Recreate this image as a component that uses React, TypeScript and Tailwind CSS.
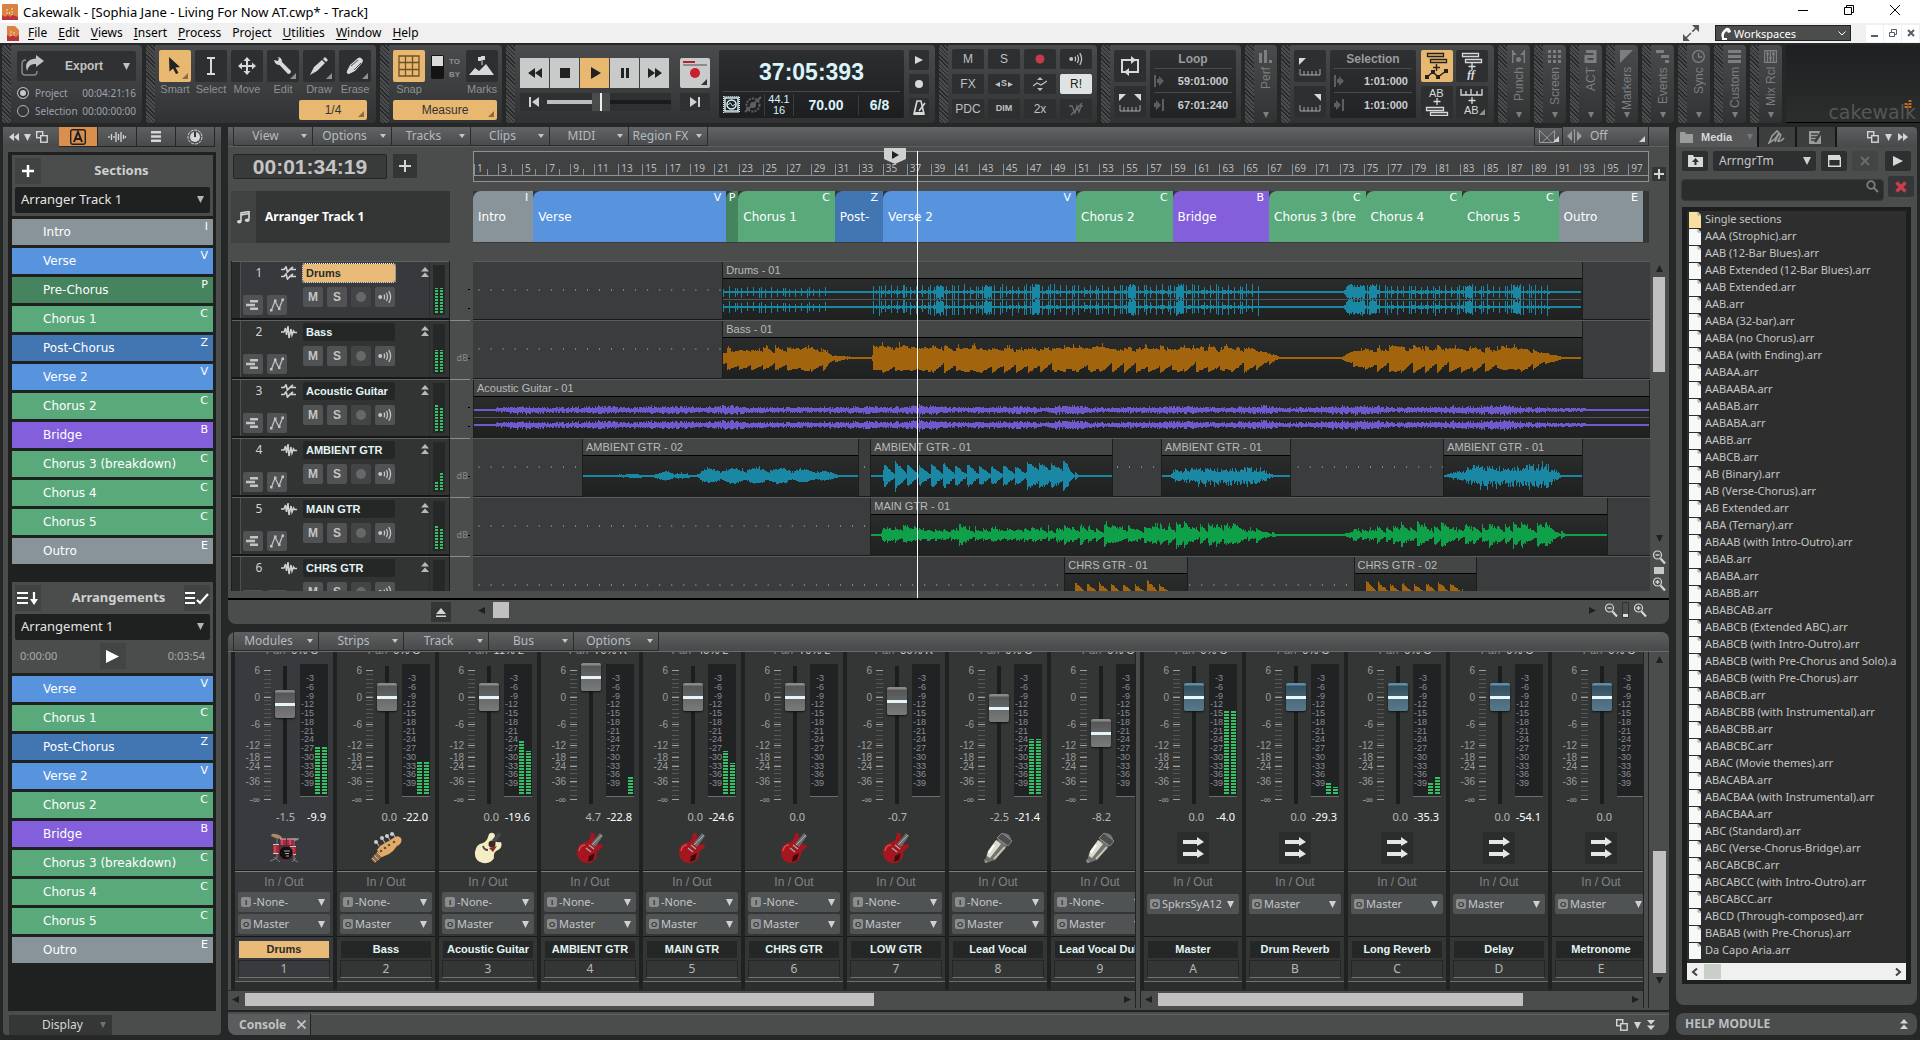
import React from 'react';
import clsx from 'clsx';

const ARIAL = "font-['Liberation_Sans',Arial,sans-serif]";
const VERDANA = "font-['DejaVu_Sans',Verdana,sans-serif]";

interface Section {
  name: string;
  key: string;
  color: string;
  bars: number;
  short?: string;
}

const GRAY = 'bg-[#88939a]';
const BLUE = 'bg-[#5894de]';
const DARK_GREEN = 'bg-[#45845e]';
const GREEN = 'bg-[#5aa97b]';
const DARK_BLUE = 'bg-[#4276b3]';
const PURPLE = 'bg-[#845fdb]';

const sections: Section[] = [
  { name: 'Intro', key: 'I', color: GRAY, bars: 5 },
  { name: 'Verse', key: 'V', color: BLUE, bars: 16 },
  { name: 'Pre-Chorus', key: 'P', color: DARK_GREEN, bars: 1, short: '' },
  { name: 'Chorus 1', key: 'C', color: GREEN, bars: 8 },
  { name: 'Post-Chorus', key: 'Z', color: DARK_BLUE, bars: 4, short: 'Post-' },
  { name: 'Verse 2', key: 'V', color: BLUE, bars: 16 },
  { name: 'Chorus 2', key: 'C', color: GREEN, bars: 8 },
  { name: 'Bridge', key: 'B', color: PURPLE, bars: 8 },
  { name: 'Chorus 3 (breakdown)', key: 'C', color: GREEN, bars: 8, short: 'Chorus 3 (bre' },
  { name: 'Chorus 4', key: 'C', color: GREEN, bars: 8 },
  { name: 'Chorus 5', key: 'C', color: GREEN, bars: 8 },
  { name: 'Outro', key: 'E', color: GRAY, bars: 7 },
];

const arrangement = [1, 3, 4, 5, 6, 7, 8, 9, 10, 11].map((i) => sections[i]);

const mediaFiles = [
  'Single sections',
  'AAA (Strophic).arr',
  'AAB (12-Bar Blues).arr',
  'AAB Extended (12-Bar Blues).arr',
  'AAB Extended.arr',
  'AAB.arr',
  'AABA (32-bar).arr',
  'AABA (no Chorus).arr',
  'AABA (with Ending).arr',
  'AABAA.arr',
  'AABAABA.arr',
  'AABAB.arr',
  'AABABA.arr',
  'AABB.arr',
  'AABCB.arr',
  'AB (Binary).arr',
  'AB (Verse-Chorus).arr',
  'AB Extended.arr',
  'ABA (Ternary).arr',
  'ABAAB (with Intro-Outro).arr',
  'ABAB.arr',
  'ABABA.arr',
  'ABABB.arr',
  'ABABCAB.arr',
  'ABABCB (Extended ABC).arr',
  'ABABCB (with Intro-Outro).arr',
  'ABABCB (with Pre-Chorus and Solo).a',
  'ABABCB (with Pre-Chorus).arr',
  'ABABCB.arr',
  'ABABCBB (with Instrumental).arr',
  'ABABCBB.arr',
  'ABABCBC.arr',
  'ABAC (Movie themes).arr',
  'ABACABA.arr',
  'ABACBAA (with Instrumental).arr',
  'ABACBAA.arr',
  'ABC (Standard).arr',
  'ABC (Verse-Chorus-Bridge).arr',
  'ABCABCBC.arr',
  'ABCABCC (with Intro-Outro).arr',
  'ABCABCC.arr',
  'ABCD (Through-composed).arr',
  'BABAB (with Pre-Chorus).arr',
  'Da Capo Aria.arr',
];

/* ---------- small drawings ---------- */

interface SvgProps {
  w: number;
  h: number;
  className?: string;
  children: React.ReactNode;
}

function Svg({ w, h, className, children }: SvgProps) {
  return (
    <svg width={w} height={h} viewBox={`0 0 ${w} ${h}`} className={clsx('shrink-0', className)} fill="currentColor" aria-hidden="true">
      {children}
    </svg>
  );
}

const line = { fill: 'none', stroke: 'currentColor' };

function Tri({ dir, size = 8, className }: { dir: 'up' | 'down' | 'left' | 'right'; size?: number; className?: string }) {
  const d = {
    up: 'M0 8L4 0L8 8Z',
    down: 'M0 0H8L4 8Z',
    left: 'M8 0V8L0 4Z',
    right: 'M0 0V8L8 4Z',
  }[dir];
  return (
    <svg width={size} height={size} viewBox="0 0 8 8" className={clsx('shrink-0', className)} fill="currentColor" aria-hidden="true">
      <path d={d} />
    </svg>
  );
}

const FlatCaret = () => (
  <Svg w={6} h={4} className="text-[#c5c6c6]">
    <path d="M0 0H6L3 4Z" />
  </Svg>
);

const Corner = ({ className }: { className?: string }) => (
  <Svg w={6} h={6} className={clsx('absolute right-[3px] bottom-[3px]', className ?? 'text-[#8f9090]')}>
    <path d="M6 0V6H0Z" />
  </Svg>
);

const Echo = () => (
  <Svg w={14} h={14}>
    <circle cx="2.2" cy="7" r="2" />
    <path d="M6 4.6Q7.2 7 6 9.4M8.4 3Q10.6 7 8.4 11M10.8 1.2Q14.4 7 10.8 12.8" {...line} strokeWidth="1.3" />
  </Svg>
);

const Windows = () => (
  <Svg w={12} h={12}>
    <rect x="0.7" y="0.7" width="6" height="6" {...line} strokeWidth="1.4" />
    <rect x="4.7" y="4.7" width="6.5" height="6.5" fill="#4a4c4c" stroke="currentColor" strokeWidth="1.4" />
  </Svg>
);

const Logo = () => (
  <Svg w={16} h={16}>
    <rect width="16" height="16" rx="1" fill="#d98244" />
    <path d="M0 11L3 13L6 11L8 13L11 11L16 13V16H0Z" fill="#b8333b" />
    <path d="M5 5V11M7.5 8V11M10 4V11" stroke="#f6dfa8" strokeDasharray="2 1" />
  </Svg>
);

const DocLogo = () => (
  <Svg w={12} h={15}>
    <path d="M0 0H8L12 4V15H0Z" fill="#d98244" />
    <path d="M0 9L3 11L6 9L9 11L12 9V15H0Z" fill="#b8333b" />
    <path d="M4 5V10M7 6V10" stroke="#f6dfa8" strokeDasharray="2 1" />
  </Svg>
);

const DoubleUp = ({ down = false }: { down?: boolean }) => (
  <Svg w={8} h={10} className={down ? 'rotate-180' : ''}>
    <path d="M0 4.5L4 0L8 4.5ZM0 10L4 5.5L8 10Z" />
  </Svg>
);

const StereoIcon = () => (
  <Svg w={16} h={14}>
    <path d="M0 3.5H3L5 1L6.5 6L9 3.5L12 1M9 3.5H15M0 10.5H3L5 8L6.5 13L9 10.5L12 8M9 10.5H15" {...line} strokeWidth="1.7" />
  </Svg>
);

const MonoIcon = () => (
  <Svg w={16} h={14}>
    <path d="M0 7H3L4.5 3L5.5 10L7 1L8 13L10 4L11 10L12.5 6L13.5 7.5H16" {...line} strokeWidth="1.5" />
  </Svg>
);

const Zoomer = ({ plus = false }: { plus?: boolean }) => (
  <Svg w={14} h={14}>
    <circle cx="5.5" cy="5" r="4" {...line} strokeWidth="1.2" />
    <path d="M8.5 8.5L13 13.5" {...line} strokeWidth="2.2" />
    <path d={plus ? 'M3.5 5H7.5M5.5 3V7' : 'M3.5 5H7.5'} {...line} strokeWidth="1.4" />
  </Svg>
);

const RulerGlyph = ({ left, right }: { left?: boolean; right?: boolean }) => (
  <Svg w={24} h={22}>
    <path d="M2 14V20H22V14M6 16V20M10 16V20M14 16V20M18 16V20" {...line} strokeWidth="1" opacity="0.7" />
    {left && <path d="M1 3H8L1 10Z" />}
    {right && <path d="M23 3H16L23 10Z" />}
  </Svg>
);

/* ---------- title and menu ---------- */

const menus = ['File', 'Edit', 'Views', 'Insert', 'Process', 'Project', 'Utilities', 'Window', 'Help'];

function TitleBar() {
  return (
    <header>
      <div className="flex h-[23px] items-center bg-white pl-[2px] text-black">
        <Logo />
        <h1 className="ml-[5px] flex-1 text-[13px] leading-5">Cakewalk - [Sophia Jane - Living For Now AT.cwp* - Track]</h1>
        <div className="mb-1 flex items-center gap-9 pr-[20px]">
          <button type="button" aria-label="Minimize">
            <Svg w={10} h={10}><path d="M0 5.5H10" {...line} /></Svg>
          </button>
          <button type="button" aria-label="Restore">
            <Svg w={10} h={10}><path d="M0.5 2.5H7.5V9.5H0.5ZM2.5 2.5V0.5H9.5V7.5H7.5" {...line} /></Svg>
          </button>
          <button type="button" aria-label="Close">
            <Svg w={10} h={10}><path d="M0 0L10 10M10 0L0 10" {...line} /></Svg>
          </button>
        </div>
      </div>
      <div className="flex h-5 items-center bg-[#f0f0f0] pl-[7px] text-black">
        <DocLogo />
        <nav className="ml-[9px] flex flex-1">
          {menus.map((m) => (
            <button key={m} type="button" className="mr-[11px] pb-px text-[12px] leading-4">
              {m === 'Project' ? m : <><span className="underline underline-offset-2">{m[0]}</span>{m.slice(1)}</>}
            </button>
          ))}
        </nav>
        <Svg w={16} h={16} className="mr-4 text-[#555]">
          <path d="M9 0H16V7ZM0 9V16H7Z" />
          <path d="M3 13L13 3" {...line} strokeWidth="1.5" strokeDasharray="7 2" />
        </Svg>
        <div className="relative flex h-4 w-[136px] items-center border border-[#222] bg-[#4b4c4c] text-white">
          <Svg w={12} h={13} className="ml-1">
            <path d="M2 13V11Q0 6 4 3L6 1Q10 0 11 5L8 6L7 4Q3 6 4 11H7V13Z" />
          </Svg>
          <select aria-label="Workspaces" className="absolute inset-0 w-full appearance-none bg-transparent pl-[18px] text-[11px] leading-[13px]">
            <option>Workspaces</option>
          </select>
          <Svg w={8} h={5} className="absolute right-[4px]"><path d="M0.5 0.5L4 4L7.5 0.5" {...line} /></Svg>
        </div>
        <div className="ml-[15px] flex h-[17px] gap-[1px] pr-px text-[#4f5f6f]">
          <button type="button" aria-label="Minimize document" className="grid w-[17px] place-items-center bg-white">
            <Svg w={7} h={8}><path d="M0 7H7" {...line} strokeWidth="2" /></Svg>
          </button>
          <button type="button" aria-label="Restore document" className="grid w-[17px] place-items-center bg-white">
            <Svg w={8} h={8}><path d="M0.5 3.5H5.5V7.5H0.5ZM2.5 3V0.5H7.5V5.5H6" {...line} /></Svg>
          </button>
          <button type="button" aria-label="Close document" className="grid w-[17px] place-items-center bg-white">
            <Svg w={8} h={8}><path d="M1 1L7 7M7 1L1 7" {...line} strokeWidth="2" /></Svg>
          </button>
        </div>
      </div>
    </header>
  );
}

/* ---------- control bar ---------- */

function Module({ className, children }: { className?: string; children: React.ReactNode }) {
  return (
    <div className="flex h-[78px] shrink-0 overflow-hidden rounded-sm bg-gradient-to-b from-[#4a4b4c] via-[#3d3f41] to-[#303233]">
      <div className="w-[9px] bg-[repeating-linear-gradient(45deg,#27282a_0_1px,#4a4b4d_1px_3px)]" />
      <div className={className}>{children}</div>
    </div>
  );
}

interface PadProps {
  label: string;
  className?: string;
  active?: boolean;
  children: React.ReactNode;
}

function Pad({ label, className = 'size-8', active, children }: PadProps) {
  return (
    <button
      type="button"
      aria-label={label}
      className={clsx(
        'relative grid shrink-0 place-items-center rounded-xs',
        active ? 'bg-[#e8b871] text-[#222]' : 'bg-[#2e2f30] text-[#d8dad9]',
        className,
      )}
    >
      {children}
    </button>
  );
}

function Tool({ label, active, corner, children }: { label: string; active?: boolean; corner?: boolean; children: React.ReactNode }) {
  return (
    <div className="flex w-8 flex-col items-center">
      <Pad label={label} active={active}>
        {children}
        {corner && <Corner className={active ? 'text-[#8c6c3c]' : undefined} />}
      </Pad>
      <span className="text-[11px] leading-[15px] text-[#8f9192]">{label}</span>
    </div>
  );
}

function ExportModule() {
  return (
    <Module className="flex w-[131px] flex-col px-[6px] pt-[6px]">
      <button type="button" className="mb-[3px] flex h-[30px] items-center rounded-xs bg-[#303132] pl-1 text-[12px] font-bold text-[#c2c4c4]">
        <Svg w={24} h={22}>
          <path d="M5 5Q1 5 1 9V17Q1 20 4 20H13Q16 20 16 16" {...line} strokeWidth="1.5" opacity="0.6" />
          <path d="M15 0L23 6L15 12V9Q8 8 6 16Q2 5 15 3.5Z" />
        </Svg>
        <span className="flex-1">Export</span>
        <Tri dir="down" size={7} className="mr-[6px]" />
      </button>
      {[
        ['Project', '00:04:21:16'],
        ['Selection', '00:00:00:00'],
      ].map(([name, time], i) => (
        <label key={name} className="flex h-[18px] items-center font-['Noto_Sans',sans-serif] text-[10px] text-[#9ba3ae]">
          <input
            type="radio"
            name="export-range"
            defaultChecked={i === 0}
            className="size-3 appearance-none rounded-full border border-[#b5b5b5] checked:bg-[#c8c8c8] checked:shadow-[inset_0_0_0_2px_#303132]"
          />
          <span className="flex-1 pl-[6px]">{name}</span>
          <span>{time}</span>
        </label>
      ))}
    </Module>
  );
}

function ToolsModule() {
  return (
    <Module className="w-[221px] px-1 pt-[5px]">
      <div className="flex gap-1">
        <Tool label="Smart" active corner>
          <Svg w={14} h={18}><path d="M1 0L12 10L7.5 10.5L10.5 16L8 17L5 11.5L1.5 14.5Z" /></Svg>
        </Tool>
        <Tool label="Select">
          <Svg w={10} h={18}><path d="M1 1H9M1 17H9M5 1V17" {...line} strokeWidth="2" /></Svg>
        </Tool>
        <Tool label="Move">
          <Svg w={18} h={18}>
            <path d="M9 2V16M2 9H16" {...line} strokeWidth="2" />
            <path d="M9 0L12.5 4H5.5ZM9 18L12.5 14H5.5ZM0 9L4 5.5V12.5ZM18 9L14 5.5V12.5Z" />
          </Svg>
        </Tool>
        <Tool label="Edit" corner>
          <Svg w={18} h={18}>
            <path d="M0 3L4 4L5 1L3 0Q8 0 8 5L17 14Q17 17 14 17L5.5 8Q1 8 0 3Z" />
          </Svg>
        </Tool>
        <Tool label="Draw" corner>
          <Svg w={18} h={18}>
            <path d="M15 0L18 3L16 5L13 2ZM12 3L15 6L7 14L0 18L4 10Z" />
          </Svg>
        </Tool>
        <Tool label="Erase" corner>
          <Svg w={18} h={18}>
            <path d="M12 1Q14 0 15 1L17 3Q17 4 16 6L9 14L3 17Q0 17 1 14L4 8Z" />
            <path d="M5 9L12 3M8 13L15 6" stroke="#555" fill="none" />
          </Svg>
        </Tool>
      </div>
      <button type="button" className="relative mt-px ml-[140px] h-5 w-[68px] rounded-xs bg-[#e8b871] text-[12px] leading-5 text-[#333]">
        1/4
        <Corner className="text-[#8c6c3c]" />
      </button>
    </Module>
  );
}

function SnapModule() {
  return (
    <Module className="w-[113px] px-1 pt-[5px]">
      <div className="flex justify-between">
        <Tool label="Snap" active>
          <Svg w={22} h={22}><path d="M1 1H21V21H1ZM7.5 1V21M14.5 1V21M1 7.5H21M1 14.5H21" {...line} stroke="#6d5226" strokeWidth="1.3" /></Svg>
        </Tool>
        <div className="mt-[5px] flex gap-[5px]">
          <button type="button" aria-label="Snap to or by" className="flex h-6 w-[13px] items-start rounded-xs bg-[#141414] p-px">
            <span className="h-[10px] flex-1 bg-[#dadada]" />
          </button>
          <div className="text-[8px] leading-[13px] font-bold text-[#8f9192]">
            <div>TO</div>
            <div>BY</div>
          </div>
        </div>
        <Tool label="Marks">
          <Svg w={26} h={20}>
            <path d="M0 19L6 12L10 15L17 8L25 19Z" />
            <path d="M13 2V9" {...line} strokeWidth="1" />
            <path d="M9 1H12V5H9ZM12 0H16V4H12Z" />
          </Svg>
        </Tool>
      </div>
      <button type="button" className="relative mt-px h-5 w-[104px] rounded-xs bg-[#e8b871] text-[12px] leading-5 text-[#333]">
        Measure
        <Corner className="text-[#8c6c3c]" />
      </button>
    </Module>
  );
}

const transport: [string, string][] = [
  ['Rewind', 'M8 2V12L1 7ZM15 2V12L8 7Z'],
  ['Stop', 'M3 2H13V12H3Z'],
  ['Play', 'M4 1L14 7L4 13Z'],
  ['Pause', 'M4 2H7V12H4ZM9 2H12V12H9Z'],
  ['Fast forward', 'M1 2V12L8 7ZM8 2V12L15 7Z'],
];

function TransportModule() {
  return (
    <Module className="flex w-[420px] gap-[5px] pt-[5px] pl-[5px]">
      <div className="mr-[4px] flex w-[190px] flex-col pt-2">
        <div className="flex justify-between">
          <div className="flex gap-px">
            {transport.map(([name, d]) => (
              <button
                key={name}
                type="button"
                aria-label={name}
                className={clsx('grid h-[30px] w-[29px] place-items-center', name === 'Play' ? 'bg-[#e8b871]' : 'bg-[#c9cbca]')}
              >
                <Svg w={16} h={14} className="text-[#222]"><path d={d} /></Svg>
              </button>
            ))}
          </div>
          <button type="button" aria-label="Record" className="relative grid h-[30px] w-[30px] place-items-center rounded-xs bg-[#c9cbca]">
            <Svg w={30} h={30}>
              <path d="M3 3H15V5H3Z" fill="#b5222e" />
              <path d="M3 6H27V8H3Z" fill="#8c8c8c" />
              <circle cx="15" cy="15" r="5" fill="#c8202f" />
            </Svg>
            <Corner className="text-[#333]" />
          </button>
        </div>
        <div className="mt-[5px] flex h-[18px] items-center justify-between">
          <div className="flex h-full items-center bg-[#2f3031] text-[#d0d0d0]">
            <button type="button" aria-label="Go to start" className="grid w-[27px] place-items-center">
              <Svg w={10} h={10}><path d="M0 0H2V10H0ZM10 0V10L3 5Z" /></Svg>
            </button>
            <input
              type="range"
              aria-label="Song position"
              defaultValue={42}
              className="h-[4px] w-[124px] appearance-none bg-gradient-to-r from-[#bdbdbd] from-42% to-[#1b1b1c] to-42% [&::-webkit-slider-thumb]:h-[18px] [&::-webkit-slider-thumb]:w-[18px] [&::-webkit-slider-thumb]:appearance-none [&::-webkit-slider-thumb]:bg-[linear-gradient(to_right,#4a4c4c_0_8px,#eee_8px_10px,#4a4c4c_10px)]"
            />
          </div>
          <button type="button" aria-label="Go to end" className="grid h-full w-[30px] place-items-center bg-[#2f3031] text-[#d0d0d0]">
            <Svg w={10} h={10}><path d="M8 0H10V10H8ZM0 0V10L7 5Z" /></Svg>
          </button>
        </div>
      </div>
      <div className="flex h-[68px] w-[185px] flex-col rounded-xs bg-gradient-to-b from-[#2d2e2f] to-[#1d1e1f] px-1 text-[#d9f4fb]">
        <div className="flex h-[42px] items-center justify-center border-b border-[#484848] pt-1 text-[23px] font-bold">37:05:393</div>
        <div className="flex h-[25px] items-center">
          <Svg w={17} h={17} className="text-[#d9f4fb]">
            <rect x="2" y="2" width="13" height="13" {...line} strokeWidth="1.4" />
            <rect x="0.7" y="0.7" width="15.6" height="15.6" {...line} strokeWidth="1.4" strokeDasharray="1 1" />
            <circle cx="8.5" cy="8.5" r="4.5" {...line} strokeWidth="1.5" />
            <path d="M5.5 9Q7 5 8.5 8.5T11.5 8" {...line} />
          </Svg>
          <Svg w={18} h={17} className="ml-1 text-[#5d6061]">
            <circle cx="9" cy="9" r="6.5" {...line} strokeWidth="2" strokeDasharray="2 1.2" />
            <circle cx="9" cy="9" r="3" />
            <path d="M1 16L17 1" {...line} strokeWidth="2" />
          </Svg>
          <div className="ml-[2px] w-[30px] border-x border-[#3c3c3c] text-center text-[11px] leading-[11px]">
            44.1<br />16
          </div>
          <div className="h-5 flex-1 text-center text-[14px] leading-5 font-bold">70.00</div>
          <div className="h-5 w-[42px] border-l border-[#3c3c3c] text-center text-[14px] leading-5 font-bold">6/8</div>
        </div>
      </div>
      <div className="flex h-[68px] flex-col justify-between">
        <Pad label="Play options" className="size-5"><Tri dir="right" /></Pad>
        <Pad label="Record options" className="size-5"><Svg w={8} h={8}><circle cx="4" cy="4" r="4" /></Svg></Pad>
        <Pad label="Metronome" className="size-5">
          <Svg w={14} h={16}><path d="M5 1H9L12 14H2ZM7 11L13 3" {...line} strokeWidth="1.6" /><path d="M2 12H12V15H2Z" /></Svg>
        </Pad>
      </div>
    </Module>
  );
}

function MixModule() {
  const cells: [string, React.ReactNode][] = [
    ['Mute', 'M'],
    ['Solo', 'S'],
    ['Arm', <Svg w={10} h={10} className="text-[#c33c4c]"><circle cx="5" cy="5" r="4.5" /></Svg>],
    ['Input echo', <Echo />],
    ['Bypass effects', 'FX'],
    ['Exclusive solo', <span className="flex items-center gap-px text-[9px] font-bold"><Tri dir="left" size={5} />S<Tri dir="right" size={5} /></span>],
    ['Automation', <Svg w={14} h={14}><path d="M7 0L10 3H4ZM7 14L10 11H4Z" /><path d="M0 9L4 6L8 8L14 4" {...line} strokeWidth="1.2" /></Svg>],
    ['Read automation', 'R!'],
    ['Delay compensation', 'PDC'],
    ['Dim', <span className="text-[9px] font-bold">DIM</span>],
    ['Oversampling', '2x'],
    ['Bypass wave', <Svg w={14} h={14} className="text-[#6a6c6d]"><path d="M0 4L3 4L6 11L8 4L10 10L12 4H14M2 13L13 1" {...line} strokeWidth="1.3" /></Svg>],
  ];
  return (
    <Module className="w-[149px] pt-1 pl-1">
      <div className="grid w-[140px] grid-cols-4 gap-x-1 gap-y-[5px]">
        {cells.map(([name, body]) => (
          <button
            key={name}
            type="button"
            aria-label={name}
            className={clsx(
              'grid h-5 place-items-center rounded-xs text-[12px]',
              name === 'Read automation' ? 'bg-[#dfe3e3] text-[#222]' : 'bg-[#2e2f30] text-[#bfc1c1]',
            )}
          >
            {body}
          </button>
        ))}
      </div>
    </Module>
  );
}

function RangeLcd({ title, from, to }: { title: string; from: string; to: string }) {
  return (
    <div className="flex h-[68px] w-[86px] flex-col rounded-xs bg-gradient-to-b from-[#2f3031] to-[#222324] px-1 text-[12px] leading-4 font-bold">
      <div className="flex h-[19px] items-center justify-center border-b border-[#484a4b] text-[#9a9c9d]">{title}</div>
      <div className="flex h-6 items-center justify-between border-b border-[#484a4b] pr-1 text-[11px] text-[#c9cdd2]">
        <Svg w={10} h={12} className="text-[#5c5e5f]"><path d="M0 0H2V12H0ZM3 4H5V1L10 6L5 11V8H3Z" /></Svg>
        {from}
      </div>
      <div className="flex h-6 items-center justify-between pr-1 text-[11px] text-[#c9cdd2]">
        <Svg w={10} h={12} className="text-[#5c5e5f]"><path d="M8 0H10V12H8ZM0 4H2V1L7 6L2 11V8H0Z" /></Svg>
        {to}
      </div>
    </div>
  );
}

function LoopModule() {
  return (
    <Module className="flex w-[131px] gap-1 pt-[5px] pl-1">
      <div className="flex h-[68px] flex-col justify-between">
        <Pad label="Loop on/off">
          <Svg w={20} h={20}>
            <path d="M5 16H2V4H12M15 4H18V16H8" {...line} strokeWidth="2" />
            <path d="M11 0L16 4L11 8ZM9 12L4 16L9 20Z" />
          </Svg>
        </Pad>
        <Pad label="Loop to selection"><RulerGlyph left right /></Pad>
      </div>
      <RangeLcd title="Loop" from="59:01:000" to="67:01:240" />
    </Module>
  );
}

function SelectionModule() {
  return (
    <Module className="flex w-[204px] gap-1 pt-[5px] pl-1">
      <div className="flex h-[68px] flex-col justify-between">
        <Pad label="Selection start"><RulerGlyph left /></Pad>
        <Pad label="Selection end"><RulerGlyph right /></Pad>
      </div>
      <RangeLcd title="Selection" from="1:01:000" to="1:01:000" />
      <div className="grid h-[68px] grid-cols-2 content-between gap-x-[3px] pl-px">
        <Pad label="Select track envelopes" active>
          <Svg w={24} h={28}>
            <path d="M2.5 1.5H18.5V4.5H2.5ZM5.5 7.5H21.5V10.5H5.5Z" {...line} strokeWidth="1.3" />
            <path d="M11.5 12V19M8 15.5H15M2 25L8 20L13 25L21 19" {...line} strokeWidth="1.4" />
            <path d="M0 23H4V27H0ZM6 18H10V22H6ZM11 23H15V27H11ZM19 17H23V21H19Z" />
          </Svg>
        </Pad>
        <Pad label="Select articulations">
          <Svg w={24} h={28}>
            <path d="M2.5 1.5H18.5V4.5H2.5ZM5.5 7.5H21.5V10.5H5.5Z" {...line} strokeWidth="1.3" />
            <path d="M12 11V18M8.5 14.5H15.5" {...line} strokeWidth="1.4" />
            <text x="7" y="27" fontSize="12" fontWeight="bold" fontStyle="italic" fontFamily="Liberation Serif">ff</text>
          </Svg>
        </Pad>
        <Pad label="Select sections">
          <Svg w={24} h={28}>
            <text x="4" y="9" fontSize="11" fontFamily="Liberation Sans">AB</text>
            <path d="M12 10V17M8.5 13.5H15.5M1.5 19.5H18.5V22.5H1.5ZM5.5 24.5H22.5V27.5H5.5Z" {...line} strokeWidth="1.3" />
          </Svg>
        </Pad>
        <Pad label="Select time ruler">
          <Svg w={24} h={28}>
            <path d="M1 1V7H22V1M6 3V7M11 1V7M17 3V7M12 9V16M8.5 12.5H15.5" {...line} strokeWidth="1.3" />
            <text x="4" y="26" fontSize="11" fontFamily="Liberation Sans">AB</text>
          </Svg>
          <Corner />
        </Pad>
      </div>
    </Module>
  );
}

const collapsed: [string, React.ReactNode][] = [
  ['Punch', <><path d="M0.7 0V13M12.3 0V13" {...line} strokeWidth="1.4" /><path d="M0 0L5 5H0ZM13 0L8 5H13Z" /><circle cx="6.5" cy="9.5" r="2.5" /></>],
  ['Screen', <path d="M0 0H3V3H0ZM5 0H8V3H5ZM10 0H13V3H10ZM0 5H3V8H0ZM5 5H8V8H5ZM10 5H13V8H10ZM0 10H3V13H0ZM5 10H8V13H5ZM10 10H13V13H10Z" />],
  ['ACT', <path d="M2 1.5H11V11.5H2V6.5H11" {...line} strokeWidth="3" />],
  ['Markers', <path d="M0 0H13L0 13Z" />],
  ['Events', <path d="M0 0H8V3H0ZM5 5H13V8H5ZM9 10H13V13H9Z" />],
  ['Sync', <path d="M6.5 0.7A5.8 5.8 0 1 1 6.49 0.7ZM6.5 3V7H10" {...line} strokeWidth="1.3" />],
  ['Custom', <path d="M0 0H13V3H0ZM0 5H13V8H0ZM0 10H13V13H0Z" />],
  ['Mix Rcl', <path d="M0.5 0.5H12.5V12.5H0.5ZM3.5 1V12M6.5 1V12M9.5 1V12M2 4H5M5 8H8M8 4H11" {...line} strokeWidth="1.4" />],
];

function CollapsedModule({ name, icon }: { name: string; icon: React.ReactNode }) {
  return (
    <Module className="w-[23px] pt-[5px] text-[#7c7e7f]">
      <button type="button" className="flex h-[68px] w-full flex-col items-center">
        <Svg w={13} h={13}>{icon}</Svg>
        <span className="mt-[4px] flex-1 rotate-180 text-right text-[12px] leading-4 whitespace-nowrap [writing-mode:vertical-rl]">{name}</span>
        <Tri dir="down" size={6} />
      </button>
    </Module>
  );
}

function ControlBar() {
  return (
    <div className={clsx('flex gap-1 pt-[2px] pl-[2px]', ARIAL)}>
      <ExportModule />
      <ToolsModule />
      <SnapModule />
      <TransportModule />
      <MixModule />
      <LoopModule />
      <CollapsedModule name="Perf" icon={<path d="M0 3H3V13H0ZM5 0H8V13H5ZM10 10H13V13H10Z" />} />
      <SelectionModule />
      {collapsed.map(([name, icon]) => (
        <CollapsedModule key={name} name={name} icon={icon} />
      ))}
      <div className="flex h-[78px] min-w-0 flex-1 items-end justify-end overflow-hidden border-b border-black bg-gradient-to-b from-[#1f2021] to-[#2c2d2d] pr-1">
        <div className="relative font-['DejaVu_Sans',sans-serif] text-[19px] leading-5 text-[#565656]">
          cakewalk
          <Svg w={9} h={8} className="absolute -top-[2px] right-[3px] text-[#c76a1e]">
            <path d="M2 8V3M6 8V0" {...line} strokeWidth="3" strokeDasharray="2 1" />
          </Svg>
        </div>
      </div>
    </div>
  );
}

/* ---------- inspector on the left ---------- */

function SectionRow({ section }: { section: Section }) {
  return (
    <li>
      <button type="button" className={clsx('relative flex h-[26px] w-full items-center pl-[31px] text-[12px] text-white', VERDANA, section.color)}>
        {section.name}
        <span className="absolute top-px right-[5px] text-[11px] leading-[13px]">{section.key}</span>
      </button>
    </li>
  );
}

function DarkSelect({ value }: { value: string }) {
  return (
    <div className="relative mx-[3px] h-[26px] rounded-xs bg-[#1f2020]">
      <select aria-label={value} className="block h-full w-full appearance-none pl-[6px] text-[13px] text-[#e4e4e4]">
        <option>{value}</option>
      </select>
      <Tri dir="down" size={7} className="absolute top-[9px] right-[6px] text-[#b5b5b5]" />
    </div>
  );
}

function Inspector() {
  return (
    <aside className="flex w-[218px] shrink-0 flex-col rounded-sm bg-[#4b4d4d]">
      <div className="flex h-5 items-center bg-gradient-to-b from-[#5d5f60] to-[#47494a] text-[#d5d7d7]">
        <div className="flex w-14 items-center gap-[5px] pl-[6px]">
          <Svg w={10} h={8}><path d="M5 0V8L0 4ZM10 0V8L5 4Z" /></Svg>
          <Tri dir="down" size={7} />
          <Windows />
        </div>
        {['Arranger', 'Clip', 'Track', 'ProChannel'].map((t, i) => (
          <button
            key={t}
            type="button"
            aria-label={t}
            className={clsx('grid h-5 w-[39px] place-items-center border-r border-b border-[#252626]', i === 0 && 'bg-[#d98f4e] text-[#1f1f1f]')}
          >
            {i === 0 && <Svg w={16} h={16}><rect x="0.7" y="0.7" width="14.6" height="14.6" rx="2" {...line} strokeWidth="1.4" /><path d="M4 13L8 3L12 13M5.5 10H10.5" {...line} strokeWidth="2" /></Svg>}
            {i === 1 && <Svg w={18} h={12}><path d="M1 5V7M3.5 3V9M6 5V7M8 1V11M10.5 3V9M13 1V11M15.5 4V8M17.5 5V7" {...line} strokeWidth="1.3" /></Svg>}
            {i === 2 && <Svg w={10} h={11}><path d="M0 0H10V2.5H0ZM0 4.2H10V6.7H0ZM0 8.4H10V11H0Z" /></Svg>}
            {i === 3 && <Svg w={16} h={16}><circle cx="8" cy="8" r="7" {...line} strokeDasharray="3 1" /><circle cx="8" cy="8" r="5" /><path d="M8 8V3" stroke="#333" strokeWidth="2" /></Svg>}
          </button>
        ))}
      </div>
      <div className="mx-[5px] mt-[5px] flex flex-1 flex-col bg-[#1f2020] px-1 pt-[3px] pr-[3px]">
        <div className="mb-[3px] h-[61px] bg-[#4b4d4d]">
          <div className="flex h-8 items-center px-[3px]">
            <button type="button" aria-label="Add section" className="grid size-[26px] place-items-center bg-[#414343] text-white">
              <Svg w={14} h={14}><path d="M7 1V13M1 7H13" {...line} strokeWidth="2.5" /></Svg>
            </button>
            <h2 className="flex-1 pr-2 text-center text-[13px] font-bold text-[#cfd0d0]">Sections</h2>
          </div>
          <DarkSelect value="Arranger Track 1" />
        </div>
        <ul className="flex flex-col gap-[3px]">
          {sections.map((s) => <SectionRow key={s.name} section={s} />)}
        </ul>
        <div className="mt-[18px] mb-[3px] h-[91px] bg-[#4b4d4d]">
          <div className="flex h-8 items-center justify-between px-[3px] text-white">
            <button type="button" aria-label="Move down" className="grid size-[26px] place-items-center bg-[#414343]">
              <Svg w={22} h={14}><path d="M0 2H11M0 7H11M0 12H11M17 1V12" {...line} strokeWidth="2.2" /><path d="M13 8H21L17 14Z" /></Svg>
            </button>
            <h2 className="flex-1 pl-3 text-center text-[13px] font-bold text-[#cfd0d0]">Arrangements</h2>
            <button type="button" aria-label="Commit" className="grid size-[26px] place-items-center bg-[#414343]">
              <Svg w={24} h={14}><path d="M0 2H10M0 7H10M0 12H10M12 9L15 12L23 3" {...line} strokeWidth="2.2" /></Svg>
            </button>
          </div>
          <DarkSelect value="Arrangement 1" />
          <div className="mx-2 mt-[3px] flex h-[26px] items-center justify-between text-[11px] text-[#a8aaaa]">
            <span>0:00:00</span>
            <button type="button" aria-label="Play arrangement" className="grid size-[26px] place-items-center bg-[#434545] text-white">
              <Tri dir="right" size={13} />
            </button>
            <span>0:03:54</span>
          </div>
        </div>
        <ul className="flex flex-col gap-[3px]">
          {arrangement.map((s) => <SectionRow key={s.name} section={s} />)}
        </ul>
      </div>
      <div className="mt-1 flex h-5 pl-[6px]">
        <button type="button" className="flex w-[103px] items-center justify-between bg-[#353636] pr-[6px] pl-[33px] text-[12px] text-[#d5d6d6]">
          Display
          <Tri dir="down" size={6} className="text-[#6f7070]" />
        </button>
      </div>
    </aside>
  );
}

/* ---------- track view ---------- */

const BARS = 97.6;

type Envelope = [number, number][];
type Kind = 'hits' | 'pluck' | 'dense' | 'swell' | 'strum' | 'stabs';

interface Clip {
  name: string;
  from: number;
  to: number;
  env: Envelope;
  kind: Kind;
}

interface Track {
  name: string;
  stereo?: boolean;
  color: string;
  meter: [number, number];
  clips: Clip[];
}

const tracks: Track[] = [
  {
    name: 'Drums',
    stereo: true,
    color: '#1a88a4',
    meter: [25, 25],
    clips: [
      {
        name: 'Drums - 01',
        from: 21.7,
        to: 93,
        kind: 'hits',
        env: [[21.7, 0.7], [30.2, 0.7], [30.3, 0], [34.1, 0], [34.2, 1], [66.5, 1], [66.6, 0], [73.2, 0], [73.6, 1], [90.6, 1], [90.7, 0], [93, 0]],
      },
    ],
  },
  {
    name: 'Bass',
    color: '#a3640e',
    meter: [22, 22],
    clips: [
      {
        name: 'Bass - 01',
        from: 21.7,
        to: 93,
        kind: 'pluck',
        env: [[21.7, 0.75], [30, 0.85], [30.8, 0.3], [32.5, 0.06], [34.1, 0.06], [34.2, 0.95], [65.8, 0.9], [68, 0.06], [73, 0.06], [74, 0.6], [77, 0.95], [88.5, 0.85], [91.5, 0.06], [93, 0.06]],
      },
    ],
  },
  {
    name: 'Acoustic Guitar',
    stereo: true,
    color: '#7059cc',
    meter: [26, 24],
    clips: [
      {
        name: 'Acoustic Guitar - 01',
        from: 1,
        to: 98.6,
        kind: 'dense',
        env: [[1, 0.05], [2.2, 0.1], [3, 0.4], [5.5, 0.6], [8, 0.4], [12, 0.6], [14, 0.4], [17, 0.65], [20, 0.45], [22.5, 0.75], [24, 0.4], [30, 0.4], [34, 0.6], [36, 0.4], [38, 0.75], [41, 0.4], [46, 0.6], [48, 0.4], [51, 0.7], [53, 0.35], [60, 0.6], [63, 0.4], [67, 0.7], [68, 0.35], [75, 0.7], [77, 0.4], [80, 0.45], [87, 0.7], [88, 0.4], [93, 0.3], [94, 0.06], [98.6, 0.06]],
      },
    ],
  },
  {
    name: 'AMBIENT GTR',
    color: '#1a88a4',
    meter: [9, 18],
    clips: [
      { name: 'AMBIENT GTR - 02', from: 10.1, to: 33.1, kind: 'swell', env: [[10, 0.02], [12.5, 0.06], [14, 0.22], [15.5, 0.08], [17, 0.4], [19.4, 0.08], [20, 0.55], [23, 0.65], [27, 0.65], [30, 0.45], [32, 0.04], [33.1, 0.04]] },
      { name: 'AMBIENT GTR - 01', from: 34, to: 54.1, kind: 'stabs', env: [[34, 0.03], [34.9, 0.05], [35.1, 1], [42, 0.95], [46.9, 1], [50.3, 1.1], [51.3, 0.06], [53, 0.03], [54.1, 0.03]] },
      { name: 'AMBIENT GTR - 01', from: 58.1, to: 68.8, kind: 'dense', env: [[58, 0.03], [58.8, 0.05], [59, 0.6], [64, 0.8], [66, 0.7], [67.6, 0.05], [68.8, 0.04]] },
      { name: 'AMBIENT GTR - 01', from: 81.5, to: 93, kind: 'dense', env: [[81.4, 0.03], [81.9, 0.2], [84, 0.95], [86, 0.85], [90, 1], [91.4, 0.06], [93, 0.04]] },
    ],
  },
  {
    name: 'MAIN GTR',
    color: '#0fa04a',
    meter: [24, 20],
    clips: [
      {
        name: 'MAIN GTR - 01',
        from: 34,
        to: 95.1,
        kind: 'strum',
        env: [[34, 0.05], [34.8, 0.1], [35, 0.8], [40, 0.75], [42, 0.9], [45, 0.65], [50, 0.95], [60, 1], [66, 0.8], [67.8, 0.06], [73, 0.05], [74.5, 0.8], [82, 1], [90, 1.05], [91.8, 0.08], [95.1, 0.03]],
      },
    ],
  },
  {
    name: 'CHRS GTR',
    color: '#a3640e',
    meter: [0, 0],
    clips: [
      { name: 'CHRS GTR - 01', from: 50.2, to: 60.3, kind: 'stabs', env: [[50, 0.02], [50.8, 0.05], [51, 1], [58.9, 1], [59.1, 0.05], [60.3, 0.05]] },
      { name: 'CHRS GTR - 02', from: 74.1, to: 84.2, kind: 'stabs', env: [[74, 0.02], [74.8, 0.05], [75, 1], [82.9, 1], [83.1, 0.05], [84.2, 0.05]] },
    ],
  },
];

const noise = (i: number) => {
  const s = Math.sin(i * 12.9898) * 43758.5453;
  return s - Math.floor(s);
};

const level = (env: Envelope, bar: number) => {
  for (let i = 1; i < env.length; i++) {
    const [b0, a0] = env[i - 1];
    const [b1, a1] = env[i];
    if (bar <= b1) return a0 + ((a1 - a0) * (bar - b0)) / (b1 - b0);
  }
  return 0;
};

// one vertical stroke per pixel column, drawn around the centre line
function wavePath({ from, to, env, kind }: Clip, centre: number, half: number) {
  const n = Math.round((to - from) * 12);
  let d = '';
  for (let x = 0; x < n; x++) {
    const bar = from + x / 12;
    const beat = bar % 1;
    const a = level(env, bar);
    const r = noise(x + 7);
    const spike = noise(x + 211) > 0.93 ? 0.25 : 0;
    let up = 0;
    let down = 0;
    if (kind === 'hits') {
      const fill = bar > 34 && bar % 4 > 3.3 && noise(Math.floor(bar / 4)) > 0.45;
      const intro = bar > 73 && bar < 75;
      const hit = x % 6 === 0 || x % 24 === 14 || fill || intro;
      up = a * (hit ? 0.55 + 0.45 * r : 0.1 + 0.12 * r);
      down = a * (hit ? 0.6 + 0.5 * noise(x + 99) : 0.12 + 0.1 * r);
    } else if (kind === 'pluck') {
      const b = Math.floor(bar);
      const held = noise(b + 3) > 0.55;
      const depth = 0.45 + 0.4 * noise(b + 41);
      up = a * (0.62 + 0.3 * noise(Math.floor(x / 4)) - (held ? 0 : 0.25) * beat + 0.12 * r + spike);
      down = a * (held ? 0.85 + 0.25 * noise(Math.floor(x / 3) + 9) : 1.1 - depth * beat + 0.1 * r);
    } else if (kind === 'strum') {
      const step = Math.floor(bar * 1.5);
      const phase = (bar * 1.5) % 1;
      const accent = 0.5 + 0.5 * noise(step);
      const decay = 0.3 + 0.5 * noise(step + 17);
      up = a * (accent * (1 - decay * phase) * (0.75 + 0.35 * r) + spike);
      down = a * accent * (1 - decay * phase) * (0.7 + 0.35 * noise(x + 31));
    } else if (kind === 'stabs') {
      const loud = 0.7 + 0.4 * noise(Math.floor(bar) + 5);
      const fade = a > 1 ? 0.6 : 0.9;
      up = a * loud * (1 - fade * beat) * (0.85 + 0.2 * r);
      down = up * (0.8 + 0.3 * noise(x + 31));
    } else if (kind === 'swell') {
      const phase = Math.abs(Math.sin(bar * 1.6));
      up = a * (0.3 + 0.4 * phase + 0.25 * r + spike);
      down = a * (0.3 + 0.4 * phase + 0.2 * noise(x + 61));
    } else {
      up = a * (0.35 + 0.55 * r + spike);
      down = a * (0.35 + 0.55 * noise(x + 53) + spike);
    }
    const top = Math.max(1, Math.round(up * half));
    const bottom = Math.max(1, Math.round(down * half));
    d += `M${x} ${centre - top}h1V${centre + bottom}h-1Z`;
  }
  return d;
}

function ClipBox({ clip, track }: { clip: Clip; track: Track }) {
  const width = Math.round((clip.to - clip.from) * 12);
  return (
    <div className="h-[58px] min-w-0 border-x border-[#1c1d1d] bg-gradient-to-b from-[#2f3130] to-[#1f2020]" style={{ flex: `${clip.to - clip.from} 1 0px` }}>
      <div className={clsx('h-[17px] truncate border-b border-black bg-[#444545] pl-[3px] text-[11px] leading-4 text-[#b9bbbb]', ARIAL)}>{clip.name}</div>
      <svg width="100%" height="41" viewBox={`0 0 ${width} 41`} preserveAspectRatio="none" fill={track.color} shapeRendering="crispEdges" className="block" aria-hidden="true">
        {track.stereo ? (
          <>
            <path d={wavePath(clip, 13, 8)} />
            <path d={`M0 20H${width}V21H0Z`} fill="#555" />
            <path d={wavePath(clip, 28, 8)} />
          </>
        ) : (
          <path d={wavePath(clip, 20, 14)} />
        )}
      </svg>
    </div>
  );
}

function Lane({ track }: { track: Track }) {
  const parts: React.ReactNode[] = [];
  let pos = 1;
  track.clips.forEach((clip, i) => {
    if (clip.from > pos) parts.push(<div key={`gap-${i}`} style={{ flex: `${clip.from - pos} 1 0px` }} />);
    parts.push(<ClipBox key={`clip-${i}`} clip={clip} track={track} />);
    pos = clip.to;
  });
  if (pos < BARS + 1) parts.push(<div key="tail" className="bg-[#3b3c3e]" style={{ flex: `${BARS + 1 - pos} 1 0px` }} />);
  return (
    <div
      className="flex h-[59px] border-t border-b border-t-[#5a5c5c] border-b-[#191a1a] bg-[#3b3c3e] bg-[radial-gradient(circle_at_50%_28px,#85878a_1px,transparent_1px)] bg-repeat-x"
      style={{ backgroundSize: `${100 / BARS}% 100%` }}
    >
      {parts}
    </div>
  );
}

function SmallMeter({ values }: { values: [number, number] }) {
  return (
    <div className="mt-[3px] flex h-[50px] w-3 items-end justify-center gap-[2px] bg-[#262727] pb-[2px]">
      {values.map((v, i) => (
        <div key={i} className="w-[3px] bg-[repeating-linear-gradient(to_top,#33c163_0_2px,#262727_2px_3px)]" style={{ height: v }} />
      ))}
    </div>
  );
}

function TrackHeader({ track, index }: { track: Track; index: number }) {
  const selected = index === 0;
  const small = 'grid size-5 place-items-center rounded-xs bg-[#505253] text-[12px] font-bold text-[#c3c5c5]';
  return (
    <div className={clsx('flex h-[59px] border-t border-b-2 border-t-[#5f6161] border-b-[#151616]', selected ? 'bg-[#37393c]' : 'bg-[#323433]')}>
      <div className="w-[9px] border-r border-[#4f5151] bg-[#2a2b2b]" />
      <div className="flex w-[63px] flex-col justify-between pb-[3px] pl-[2px]">
        <div className="flex h-[22px] items-center justify-between pr-[6px] text-[12px] text-[#d0d2d2]">
          <span className="w-8 text-center">{index + 1}</span>
          {track.stereo ? <StereoIcon /> : <MonoIcon />}
        </div>
        <div className="flex gap-1">
          <button type="button" aria-label="Take lanes" className={small}>
            <Svg w={14} h={12}><path d="M4 1H12V3.5H4ZM0 4.8H9V7.3H0ZM4 8.6H12V11H4Z" /></Svg>
          </button>
          <button type="button" aria-label="Automation lanes" className={small}>
            <Svg w={14} h={14}><path d="M1.5 12L5 3L9 11L12.5 2" {...line} strokeWidth="1.2" /><path d="M0 11H2.5V13.5H0ZM4 1.5H6.5V4H4ZM8 9.5H10.5V12H8ZM11.5 0.5H14V3H11.5Z" /></Svg>
          </button>
        </div>
      </div>
      <div className="w-[92px] pt-[2px]">
        <input
          aria-label={`Track ${index + 1} name`}
          defaultValue={track.name}
          className={clsx(
            'block h-[18px] w-full rounded-xs px-[3px] text-[11px] font-bold',
            ARIAL,
            selected ? 'bg-[#e8bc78] text-[#2b2b2b] outline outline-dotted outline-white' : 'bg-[#252727] text-[#e2f5f5]',
          )}
        />
        <div className={clsx('mt-[5px] flex gap-1', ARIAL)}>
          <button type="button" className={small}>M</button>
          <button type="button" className={small}>S</button>
          <button type="button" aria-label="Arm" className="grid size-5 place-items-center rounded-xs bg-[#424445] text-[#676969]">
            <Svg w={10} h={10}><circle cx="5" cy="5" r="5" /></Svg>
          </button>
          <button type="button" aria-label="Input echo" className={small}><Echo /></button>
        </div>
      </div>
      <div className="flex-1 pt-[5px] pl-[26px] text-[#b8baba]"><DoubleUp /></div>
      <div className="border-l border-[#2b2c2c] pr-[4px] pl-[3px]"><SmallMeter values={track.meter} /></div>
    </div>
  );
}

function MenuStrip({ items, width }: { items: string[]; width: string }) {
  return (
    <>
      {items.map((m) => (
        <button
          key={m}
          type="button"
          className={clsx('flex h-[19px] shrink-0 items-center justify-between border-r border-b border-[#2a2b2b] pr-[5px] text-[12px] text-[#b4bcc0]', width)}
        >
          <span className="flex-1 pr-1 text-center whitespace-nowrap">{m}</span>
          <FlatCaret />
        </button>
      ))}
    </>
  );
}

const barNumbers = Array.from({ length: 49 }, (_, i) => 1 + i * 2);

function Ruler() {
  return (
    <div className="mt-1 flex h-[31px] flex-1 flex-col overflow-hidden border border-[#8f9291] bg-[#404142]">
      <div className="mt-3 flex h-3 border-b border-[#8f9291]">
        {barNumbers.map((n) => (
          <div key={n} className="relative min-w-0 border-l border-[#8f9291]" style={{ flex: `${n === 97 ? 1.6 : 2} 1 0px` }}>
            <span className="block pl-[2px] text-[10px] leading-[9px] text-[#b9bbbb]">{n}</span>
            {n < 10 && <span className="absolute bottom-0 left-1/2 h-[6px] border-l border-[#8f9291]" />}
          </div>
        ))}
      </div>
    </div>
  );
}

function ArrangerLane() {
  return (
    <div className="flex h-[52px] min-w-0 flex-1 border-b border-[#3a3b3b] bg-[#343636]">
      {sections.map((s) => (
        <div
          key={s.name}
          className={clsx('relative h-[51px] min-w-0 rounded-tl-lg text-[12px] whitespace-nowrap text-white', VERDANA, s.color)}
          style={{ flex: `${s.bars} 1 0px` }}
        >
          <div className="pl-[5px] leading-[52px]">{s.short ?? s.name}</div>
          <span className={clsx('absolute top-0 text-[11px] leading-[14px]', s.bars > 1 ? 'right-[5px]' : 'right-[3px]')}>{s.key}</span>
        </div>
      ))}
      <div style={{ flex: '0.5 1 0px' }} />
    </div>
  );
}

function DbScale() {
  return (
    <div className="w-5 text-[9px] text-[#8a8c8c]">
      {tracks.map((t, i) => (
        <div key={t.name} className={clsx('flex h-[59px] flex-col items-end border-t pt-px', i > 0 ? 'border-[#8a8c8c]' : 'border-transparent')}>
          {t.stereo ? (
            <>
              <span className="mt-[26px] w-[2px] border-t border-black" />
              <span className="mt-[18px] w-[2px] border-t border-black" />
            </>
          ) : (
            i < 5 && <span className="flex items-center pt-[31px] leading-[10px]">dB<span className="w-[2px] border-t border-black" /></span>
          )}
        </div>
      ))}
    </div>
  );
}

function TrackView() {
  return (
    <section className="flex flex-col rounded-b-lg bg-[#4b4d4d]">
      <div className="flex h-5 border-b border-[#5d5f60] bg-gradient-to-b from-[#626465] to-[#47494a]">
        <div className="w-[6px] border-r border-[#2a2b2b]" />
        <MenuStrip items={['View', 'Options', 'Tracks', 'Clips', 'MIDI', 'Region FX']} width="w-[79px]" />
        <div className="flex-1" />
        <button type="button" aria-label="Crossfade" className="relative grid w-[29px] place-items-center border border-[#2a2b2b] pr-1 text-[#9a9c9c]">
          <Svg w={16} h={13}><path d="M0.5 0.5V12.5H15.5V0.5L3 12.5M0.5 0.5L13 12.5" {...line} /></Svg>
          <Corner className="text-[#d0d0d0]" />
        </button>
        <button type="button" className="relative flex w-[86px] items-center gap-2 border-r border-b border-[#2a2b2b] pl-1 text-[12px] text-[#b4bcc0]">
          <Svg w={15} h={14} className="text-[#9a9c9c]"><path d="M5 2V12L0 7ZM10 2V12L15 7ZM7 0H8V14H7Z" /></Svg>
          Off
          <Corner className="text-[#d0d0d0]" />
        </button>
        <div className="w-5" />
      </div>

      <div className="relative pb-[7px]">
        <div className="flex h-11">
          <div className="flex w-[245px] items-start pt-[7px] pl-[5px]">
            <div className={clsx('h-[25px] w-[154px] rounded-xs border border-[#242525] bg-[#393b3b] text-center text-[21px] leading-[23px] font-bold text-[#c4c4c4]', ARIAL)}>
              00:01:34:19
            </div>
            <button type="button" aria-label="Add track" className="ml-[6px] grid size-6 place-items-center bg-[#343636] text-[#d5d5d5]">
              <Svg w={12} h={12}><path d="M6 0V12M0 6H12" {...line} strokeWidth="2" /></Svg>
            </button>
          </div>
          <Ruler />
          <div className="w-5 pt-5 pl-[3px]">
            <button type="button" aria-label="Add ruler" className="grid size-[14px] place-items-center bg-[#343636] text-[#d5d5d5]">
              <Svg w={10} h={10}><path d="M5 0V10M0 5H10" {...line} strokeWidth="2" /></Svg>
            </button>
          </div>
        </div>

        <div className="mb-[18px] flex h-[52px] pr-5 pl-[3px]">
          <div className="mr-[23px] flex w-[219px] bg-[#343636]">
            <div className="grid w-[25px] place-items-center bg-[#404242] text-[#d8d8d8]">
              <Svg w={13} h={13}>
                <path d="M4 10V2L12 0.5V8.5M4 4L12 2.5" {...line} strokeWidth="1.6" />
                <ellipse cx="2.3" cy="10.8" rx="2.3" ry="1.8" /><ellipse cx="10.2" cy="9.2" rx="2.3" ry="1.8" />
              </Svg>
            </div>
            <div className="pl-[9px] text-[12px] leading-[52px] font-bold text-white">Arranger Track 1</div>
          </div>
          <ArrangerLane />
        </div>

        <div className="flex h-[330px] overflow-hidden pl-[3px]">
          <div className="w-[219px] border-x border-[#1b1c1c]">
            {tracks.map((t, i) => <TrackHeader key={t.name} track={t} index={i} />)}
          </div>
          <div className="mr-[3px]"><DbScale /></div>
          <div className="min-w-0 flex-1">
            {tracks.map((t) => <Lane key={t.name} track={t} />)}
          </div>
          <div className="flex w-[19px] flex-col items-center pt-1 pr-px text-[#1f2020]">
            <Tri dir="up" size={7} />
            <div className="mt-[5px] h-[95px] w-3 shrink-0 bg-[#c0c0c0]" />
            <Tri dir="down" size={7} className="mt-auto mb-2" />
            <div className="flex flex-col items-center gap-[3px] text-[#d5d5d5]">
              <Zoomer />
              <div className="h-[7px] w-[10px] bg-[#c8c8c8]" />
              <Zoomer plus />
            </div>
          </div>
        </div>

        {/* playhead */}
        <div className="pointer-events-none absolute inset-y-0 right-5 left-[245px]">
          <div className="absolute top-1 bottom-0 left-[37.75%] w-px bg-white" />
          <Svg w={24} h={16} className="absolute top-px left-[34.9%]">
            <path d="M1 0H23V11L12 16L1 11Z" fill="#cfd1d1" />
            <path d="M9 3L16 7L9 11Z" fill="#222" />
          </Svg>
        </div>
      </div>

      <div className="flex h-[26px] items-center border-t-2 border-black">
        <div className="flex w-[245px] justify-end pr-[22px]">
          <button type="button" aria-label="Show bus pane" className="grid size-5 place-items-center bg-[#343636] text-[#d5d5d5]">
            <Svg w={10} h={9}><path d="M0 6L5 0L10 6ZM0 7.5H10V9H0Z" /></Svg>
          </button>
        </div>
        <div className="flex flex-1 items-center gap-2 pr-[22px] pb-1 pl-[5px] text-[#1f2020]">
          <Tri dir="left" size={7} />
          <div className="h-4 w-4 bg-[#c0c0c0]" />
          <div className="flex-1" />
          <Tri dir="right" size={7} />
          <div className="flex items-center gap-[4px] text-[#d5d5d5]">
            <Zoomer />
            <div className="flex h-4 w-[7px] items-end border border-[#333]"><div className="h-[3px] w-full bg-[#ddd]" /></div>
            <Zoomer plus />
          </div>
        </div>
      </div>
    </section>
  );
}

/* ---------- console ---------- */

interface Channel {
  name: string;
  id: string;
  pan: string;
  knob: number;
  vol: string;
  peak?: string;
  meter?: [number, number];
  icon: 'drums' | 'bass' | 'acoustic' | 'electric' | 'mic' | 'bus';
  out?: string;
}

const channels: Channel[] = [
  { name: 'Drums', id: '1', pan: '0% C', knob: 34, vol: '-1.5', peak: '-9.9', meter: [47, 47], icon: 'drums' },
  { name: 'Bass', id: '2', pan: '0% C', knob: 27, vol: '0.0', peak: '-22.0', meter: [33, 33], icon: 'bass' },
  { name: 'Acoustic Guitar', id: '3', pan: '11% L', knob: 27, vol: '0.0', peak: '-19.6', meter: [53, 43], icon: 'acoustic' },
  { name: 'AMBIENT GTR', id: '4', pan: '70% R', knob: 7, vol: '4.7', peak: '-22.8', meter: [0, 17], icon: 'electric' },
  { name: 'MAIN GTR', id: '5', pan: '40% L', knob: 27, vol: '0.0', peak: '-24.6', meter: [43, 31], icon: 'electric' },
  { name: 'CHRS GTR', id: '6', pan: '70% L', knob: 27, vol: '0.0', icon: 'electric' },
  { name: 'LOW GTR', id: '7', pan: '30% R', knob: 31, vol: '-0.7', icon: 'electric' },
  { name: 'Lead Vocal', id: '8', pan: '0% C', knob: 38, vol: '-2.5', peak: '-21.4', meter: [55, 55], icon: 'mic' },
  { name: 'Lead Vocal Dub', id: '9', pan: '0% C', knob: 63, vol: '-8.2', icon: 'mic' },
];

const buses: Channel[] = [
  { name: 'Master', id: 'A', pan: '0% C', knob: 27, vol: '0.0', peak: '-4.0', meter: [83, 83], icon: 'bus', out: 'SpkrsSyA12' },
  { name: 'Drum Reverb', id: 'B', pan: '0% C', knob: 27, vol: '0.0', peak: '-29.3', meter: [11, 7], icon: 'bus', out: 'Master' },
  { name: 'Long Reverb', id: 'C', pan: '0% C', knob: 27, vol: '0.0', peak: '-35.3', meter: [11, 17], icon: 'bus', out: 'Master' },
  { name: 'Delay', id: 'D', pan: '0% C', knob: 27, vol: '0.0', peak: '-54.1', icon: 'bus', out: 'Master' },
  { name: 'Metronome', id: 'E', pan: '0% C', knob: 27, vol: '0.0', icon: 'bus', out: 'Master' },
];

function InstrumentIcon({ kind }: { kind: Channel['icon'] }) {
  if (kind === 'drums') {
    return (
      <Svg w={32} h={32}>
        <path d="M9 4V26L2 29M6 25L12 30M28 6L22 8M26 8V28L30 30M24 30L28 26" stroke="#7f7f7f" fill="none" strokeWidth="1" />
        <path d="M4 2Q9 1 14 5L13 7Q8 7 3 4Z" fill="#a98a6a" />
        <path d="M25 7L31 6L30 8L26 9Z" fill="#9a9a9a" />
        <path d="M5 13H11V21H5ZM12 7H18V13H12ZM19 7H26V13H19ZM22 15H28V22H22Z" fill="#b3243a" />
        <path d="M5 12.5H11M12 7H18M19 7H26M22 14.500H28M5 21.500H11M22 22.500H28" stroke="#ccc" />
        <path d="M14 8V13M22 8V13M7 14V21M25 16V22" stroke="#e08a94" strokeWidth="0.8" />
        <circle cx="18" cy="21" r="7" fill="#111" stroke="#7a2430" />
        <path d="M16 19H22M17 21.500H21M18 24H21" stroke="#bbb" strokeWidth="0.9" />
      </Svg>
    );
  }
  if (kind === 'bass') {
    return (
      <Svg w={32} h={32}>
        <path d="M1 27L9 18L13 24L5 31Z" fill="#9a6a43" />
        <path d="M2 26L6 30M4 23L9 28M7 20L12 25" stroke="#ddd" strokeWidth="0.7" />
        <path d="M7 18L10 14L22 7Q27 2 31 6Q33 11 27 14L23 19L19 22L12 25Z" fill="#e3aa66" />
        <path d="M6 9L9 14M12 6L15 11M17 4L20 8M23 1L25 5" stroke="#aaa" strokeWidth="1.2" />
        <circle cx="6" cy="10" r="2" fill="#ccc" /><circle cx="12" cy="6" r="2" fill="#ccc" /><circle cx="17" cy="4" r="2" fill="#ccc" /><circle cx="22" cy="2" r="2" fill="#ccc" />
        <circle cx="11" cy="19" r="1.3" fill="#554" /><circle cx="15" cy="16" r="1.3" fill="#554" /><circle cx="19" cy="13" r="1.3" fill="#554" /><circle cx="24" cy="10" r="1.3" fill="#554" />
      </Svg>
    );
  }
  if (kind === 'acoustic') {
    return (
      <Svg w={32} h={32}>
        <path d="M17 2Q21 -1 23 3L22 9Q27 11 29 10Q31 15 26 18Q21 20 22 26Q19 32 11 31Q2 29 3 20Q4 12 11 11Q15 9 16 5Z" fill="#f4ecc4" />
        <path d="M20 8L27 0L29 3L23 11Z" fill="#4a4a4a" />
        <circle cx="20" cy="12" r="3.5" fill="#3a2a22" />
        <path d="M17 16L25 14L21 20Z" fill="#8c2a26" />
        <path d="M11 14Q12 18 16 18" stroke="#444" strokeWidth="1.8" fill="none" />
      </Svg>
    );
  }
  if (kind === 'electric') {
    return (
      <Svg w={32} h={32}>
        <path d="M17 1Q21 0 21 4L20 11Q24 14 28 12L29 15Q25 18 23 20Q24 29 15 31Q5 32 3 22Q2 14 9 11Q15 10 16 6Z" fill="#a5161f" />
        <path d="M5 19Q6 13 11 13" stroke="#d2545a" fill="none" strokeWidth="1.3" />
        <path d="M17 12L26 1L29 4L21 15Z" fill="#6c6c6c" />
        <path d="M18 13L28 3" stroke="#bbb" strokeWidth="0.8" />
        <path d="M12 16L17 20M15 13L20 17" stroke="#aaa" strokeWidth="1.300" />
        <path d="M15 24L21 21L19 28L14 30Z" fill="#3b0d10" />
      </Svg>
    );
  }
  if (kind === 'mic') {
    return (
      <Svg w={32} h={32}>
        <path d="M21 1Q29 1 29 9L13 28L4 31L3 29L5 21Z" fill="#6f7172" />
        <path d="M20 1L30 9L26 14L15 6Z" fill="#4d4d4d" stroke="#999" strokeWidth="0.8" />
        <path d="M14 8L6 19L5 24L8 26L19 12Z" fill="#dcdccc" />
        <path d="M12 13L7 21" stroke="#fff" strokeWidth="2" />
        <path d="M23 15L12 27" stroke="#c4c4a8" strokeWidth="2" />
        <path d="M2 27L6 30L3 31Z" fill="#999" />
      </Svg>
    );
  }
  return (
    <Svg w={32} h={32} className="bg-[#2b2c2c] text-[#e6e6e6]">
      <path d="M6 8H20V5L27 10L20 14V12H6ZM6 20H20V17L27 22L20 26V24H6Z" />
    </Svg>
  );
}

const faderMarks: [string, number][] = [['6', 14], ['0', 41], ['-6', 68], ['-12', 89], ['-18', 101], ['-24', 110], ['-36', 125], ['-∞', 143]];
const meterMarks = Array.from({ length: 13 }, (_, i) => (i + 1) * 3);

function FaderScale() {
  return (
    <svg width="40" height="157" viewBox="0 0 40 157" className="shrink-0" aria-hidden="true">
      {Array.from({ length: 31 }, (_, i) => (
        <path key={i} d={`M29 ${14.5 + Math.round(i * 4.3)}H36`} stroke="#565858" />
      ))}
      {faderMarks.map(([label, y]) => (
        <g key={label}>
          <path d={`M29 ${y + 0.5}H36`} stroke="#a0a2a2" />
          <text x="25" y={y + 4} textAnchor="end" fontSize="10" fontFamily="Liberation Sans" fill="#9a9c9c">{label}</text>
        </g>
      ))}
    </svg>
  );
}

function StripMeter({ values }: { values?: [number, number] }) {
  return (
    <div className="mt-2 ml-[5px] flex h-[133px] w-7 shrink-0 items-end border-b border-[#6c6e6e] bg-[#212224]">
      <svg width="15" height="132" viewBox="0 0 15 132" className="shrink-0" aria-hidden="true">
        {meterMarks.map((m, i) => (
          <text key={m} x="14" y={17 + Math.round(i * 8.75)} textAnchor="end" fontSize="9" fontFamily="Liberation Sans" fill="#8b8d95">-{m}</text>
        ))}
      </svg>
      {values?.map((v, i) => (
        <div key={i} className="mr-[2px] mb-[2px] w-[5px] bg-[repeating-linear-gradient(to_top,#33c163_0_2px,#212224_2px_3px)] last:mr-0" style={{ height: v }} />
      ))}
    </div>
  );
}

function IoSelect({ kind, value, owner }: { kind: 'I' | 'O'; value: string; owner: string }) {
  return (
    <div className="relative flex h-5 items-center rounded-xs bg-[#505354]">
      <span className={clsx('ml-[3px] grid size-[10px] place-items-center rounded-xs bg-[#8b8d8d] text-[8px] font-bold text-[#333]', ARIAL)}>{kind}</span>
      <select
        aria-label={`${owner} ${kind === 'I' ? 'input' : 'output'}`}
        className="absolute inset-0 h-full w-full appearance-none pl-[15px] text-[11px] text-[#c3c6c8]"
      >
        <option>{value}</option>
      </select>
      <Tri dir="down" size={7} className="absolute right-[5px] text-[#cfd1d1]" />
    </div>
  );
}

function Strip({ channel: c, first }: { channel: Channel; first?: boolean }) {
  const bus = c.icon === 'bus';
  return (
    <div className={clsx('flex w-[98px] shrink-0 flex-col', first ? 'bg-[#383a3d]' : 'bg-[#333635]')}>
      <div className={clsx('flex h-1 items-end justify-center gap-[6px] overflow-hidden pl-4 text-[11px] leading-[12px] text-[#d0d2d2]', ARIAL)}>
        <span className="text-[#8a8c8c]">Pan</span>
        <span>{c.pan}</span>
      </div>
      <div className="flex h-[157px]">
        <FaderScale />
        <input
          type="range"
          aria-label={`${c.name} volume`}
          min={0}
          max={129}
          defaultValue={129 - c.knob}
          className={clsx(
            'h-[157px] w-5 shrink-0 appearance-none bg-[linear-gradient(#1c1d1d,#1c1d1d)] bg-[length:4px_138px] bg-center bg-no-repeat [direction:rtl] [writing-mode:vertical-lr]',
            '[&::-webkit-slider-thumb]:h-7 [&::-webkit-slider-thumb]:w-5 [&::-webkit-slider-thumb]:appearance-none [&::-webkit-slider-thumb]:rounded-xs [&::-webkit-slider-thumb]:shadow-[0_1px_2px_#111]',
            bus
              ? '[&::-webkit-slider-thumb]:bg-[linear-gradient(#5e8ea8_0_2px,#35505f_3px,#44606f_13px,#e9f8fc_13px_16px,#4a6c7d_16px,#56788a)]'
              : '[&::-webkit-slider-thumb]:bg-[linear-gradient(#888a8a_0_2px,#555757_3px,#626464_13px,#e4f5fa_13px_16px,#6a6c6c_16px,#777a79)]',
          )}
        />
        <StripMeter values={c.meter} />
      </div>
      <div className="-mt-1 flex h-4 text-[11px] leading-4 text-[#b5b7b7]">
        <span className="w-[60px] text-right">{c.vol}</span>
        <span className="w-[31px] text-right text-white">{c.peak}</span>
      </div>
      <div className="flex h-[46px] items-center justify-center border-b border-[#1c1d1d] pt-px"><InstrumentIcon kind={c.icon} /></div>
      <div className="h-[66px] border-t border-b border-t-[#7d7f7f] border-b-[#161717] px-[3px]">
        <div className={clsx('h-5 text-center text-[12px] leading-5 text-[#7d8487]', ARIAL)}>In / Out</div>
        {bus ? (
          <div className="mt-[2px]"><IoSelect kind="O" value={c.out!} owner={c.name} /></div>
        ) : (
          <div className="flex flex-col gap-[2px]">
            <IoSelect kind="I" value="-None-" owner={c.name} />
            <IoSelect kind="O" value="Master" owner={c.name} />
          </div>
        )}
      </div>
      <div
        className={clsx(
          'mx-1 mt-1 h-[17px] overflow-hidden text-center text-[11px] leading-[17px] font-bold whitespace-nowrap',
          ARIAL,
          first ? 'bg-[#e8bc78] text-[#2b2b2b]' : 'bg-[#252727] text-[#e2f5f5]',
        )}
      >
        {c.name}
      </div>
      <div className="mx-[3px] mt-[2px] h-[18px] border border-[#252626] border-b-[#707272] text-center text-[12px] leading-4 text-[#b5b7b7]">{c.id}</div>
      <div className="mt-[3px] h-[9px] border-t border-[#6c6e6e] bg-[#2c2d2d]" />
    </div>
  );
}

function HScroll({ bar }: { bar: string }) {
  return (
    <div className="flex h-[18px] items-center gap-[6px] border-t border-[#2a2b2b] px-1 text-[#1f2020]">
      <Tri dir="left" size={7} />
      <div className="flex-1"><div className={clsx('h-[13px] bg-[#c0c0c0]', bar)} /></div>
      <Tri dir="right" size={7} />
    </div>
  );
}

function Console() {
  return (
    <section className="mt-2 flex flex-1 flex-col rounded-lg bg-[#4b4d4d]">
      <div className="flex h-5 rounded-t-lg border-b border-[#6a6c6c] bg-gradient-to-b from-[#5d5f60] to-[#47494a]">
        <div className="w-[6px] border-r border-[#2a2b2b]" />
        <MenuStrip items={['Modules', 'Strips', 'Track', 'Bus', 'Options']} width="w-[85px]" />
      </div>
      <div className="flex">
        <div className="min-w-0 flex-1">
          <div className="ml-[3px] flex gap-1 overflow-hidden bg-[#202121] pl-1">
            {channels.map((c, i) => <Strip key={c.id} channel={c} first={i === 0} />)}
          </div>
          <HScroll bar="w-[72%]" />
        </div>
        <div className="w-[6px] border-x border-[#222]" />
        <div className="w-[502px]">
          <div className="flex gap-1 overflow-hidden bg-[#202121] pl-[3px]">
            {buses.map((c) => <Strip key={c.id} channel={c} />)}
          </div>
          <HScroll bar="w-[78%]" />
        </div>
        <div className="w-[6px] border-x border-[#222]" />
        <div className="flex w-5 flex-col items-center pt-1 pb-6 text-[#1f2020]">
          <Tri dir="up" size={7} />
          <div className="flex-1" />
          <div className="mb-1 h-[122px] w-[13px] bg-[#c0c0c0]" />
          <Tri dir="down" size={7} />
        </div>
      </div>
      <div className="mt-auto flex h-[25px] items-stretch border-t-2 border-[#222] pt-[2px]">
        <button type="button" className="flex w-[83px] items-center justify-between rounded-bl-lg border-r border-[#222] bg-[#5a5c5d] pr-1 pl-[11px] text-[12px] font-bold text-[#c0c2c3]">
          Console
          <Svg w={9} h={9}><path d="M0.5 0.5L8.5 8.5M8.5 0.5L0.5 8.5" {...line} strokeWidth="1.8" /></Svg>
        </button>
        <div className="flex flex-1 items-center justify-end gap-[6px] border-t border-[#626464] pr-[14px] text-[#d5d5d5]">
          <Windows />
          <Tri dir="down" size={7} />
          <DoubleUp down />
        </div>
      </div>
    </section>
  );
}

/* ---------- browser on the right ---------- */

function MediaBrowser() {
  const btn = 'grid h-5 w-[26px] shrink-0 place-items-center rounded-xs';
  const lit = 'bg-[#2e2f30] text-[#d8d8d8]';
  return (
    <aside className="flex w-[241px] shrink-0 flex-col">
      <div className="flex flex-1 flex-col rounded-lg bg-[#4b4d4d]">
        <div className="flex h-5 rounded-t-sm bg-gradient-to-b from-[#5d5f60] to-[#47494a] text-[#9a9c9c]">
          <button type="button" className={clsx('flex w-[81px] items-center gap-[7px] rounded-tl-sm bg-[#545657] pr-1 pl-1 font-bold text-[#d5d7d7]', ARIAL)}>
            <Svg w={14} h={12} className="text-[#9a9c9c]"><path d="M0 1H5L6 3H13V12H0Z" /></Svg>
            <span className="flex-1 text-left text-[11px]">Media</span>
            <Tri dir="down" size={6} className="text-[#777]" />
          </button>
          <button type="button" aria-label="Plug-ins" className="grid w-10 place-items-center border-x-2 border-[#161717] bg-[#3c3e3e]">
            <Svg w={18} h={14}><path d="M1 13L4 6L9 1L11 3L7 9L1 13ZM7 12Q10 4 12 4T10 11Q13 12 16 8" {...line} strokeWidth="1.6" /></Svg>
          </button>
          <button type="button" aria-label="Notes" className="grid w-10 place-items-center border-r-2 border-[#161717] bg-[#3c3e3e]">
            <Svg w={14} h={14}><path d="M0 1H12V14H0Z" /><path d="M2 4H9M2 7H8M2 10H6" stroke="#3c3e3e" strokeWidth="1.5" /><path d="M6 12L13 1" stroke="#3c3e3e" strokeWidth="2.5" /></Svg>
          </button>
          <div className="flex flex-1 items-center justify-end gap-[6px] pr-[9px] text-[#d5d5d5]">
            <Windows />
            <Tri dir="down" size={7} />
            <Svg w={10} h={8}><path d="M0 0V8L5 4ZM5 0V8L10 4Z" /></Svg>
          </div>
        </div>
        <div className="mt-1 flex gap-[5px] px-[6px]">
          <button type="button" aria-label="Up one folder" className={clsx(btn, lit)}>
            <Svg w={15} h={12}><path d="M0 0H5L6 2H15V12H0Z" /><path d="M7.5 3L11 7H8.5V10H6.5V7H4Z" fill="#2e2f30" /></Svg>
          </button>
          <div className="relative h-5 flex-1 rounded-xs bg-[#2e2f30]">
            <select aria-label="Media folder" className="block h-full w-full appearance-none pl-[6px] text-[12px] leading-5 text-[#c5c7c8]">
              <option>ArrngrTm</option>
            </select>
            <Tri dir="down" size={8} className="absolute top-[6px] right-[5px] text-[#d0d0d0]" />
          </div>
          <button type="button" aria-label="Save preset" className={clsx(btn, lit)}>
            <Svg w={13} h={12}><path d="M0.7 0.7H10.5L12.3 2.5V11.3H0.7Z" {...line} strokeWidth="1.4" /><path d="M0 0H12V5H0Z" /></Svg>
          </button>
          <button type="button" aria-label="Remove preset" className={clsx(btn, 'bg-[#434545] text-[#6a6c6c]')}>
            <Svg w={10} h={10}><path d="M1 1L9 9M9 1L1 9" {...line} strokeWidth="2" /></Svg>
          </button>
          <button type="button" aria-label="Audition" className={clsx(btn, lit, 'ml-[2px]')}><Tri dir="right" size={10} /></button>
        </div>
        <div className="mt-[5px] flex gap-1 pr-[3px] pl-[5px]">
          <div className="relative h-[22px] flex-1">
            <input aria-label="Search media" className="h-full w-full rounded-sm border border-[#383a3a] bg-[#2b2c2c] px-1 text-[12px] text-white" />
            <Svg w={13} h={13} className="absolute top-[4px] right-[5px] text-[#7b7d7d]">
              <circle cx="5" cy="5" r="3.8" {...line} strokeWidth="1.8" /><path d="M8 8L12 12" {...line} strokeWidth="2" />
            </Svg>
          </div>
          <button type="button" aria-label="Clear search" className="grid h-[21px] w-[26px] place-items-center rounded-xs bg-[#353637] text-[#c93d4c]">
            <Svg w={12} h={12}><path d="M1.5 1.5L10.5 10.5M10.5 1.5L1.5 10.5" {...line} strokeWidth="3.5" /></Svg>
          </button>
        </div>
        <div className="mx-[6px] mt-[9px] mb-[21px] flex flex-1 flex-col bg-[#1d1e1e] px-[5px] pt-1 pb-1">
          <ul className="flex-1 overflow-hidden bg-[#2e2e2e] pl-[2px]">
            {mediaFiles.map((f, i) => (
              <li key={f} className="flex h-[17px] items-center text-[11px] whitespace-nowrap text-[#c3c6c4]">
                <Svg w={12} h={16} className="mr-1">
                  <path d="M0 0H9L12 3V16H0Z" fill={i === 0 ? '#f6df9f' : '#f7f9f9'} />
                  <path d="M9 0V3H12" fill="none" stroke="#999" />
                </Svg>
                {f}
              </li>
            ))}
          </ul>
          <div className="flex h-[17px] items-center bg-[#f0f0f0] px-1 text-[#444]">
            <Svg w={8} h={8}><path d="M6 0.5L2 4L6 7.5" {...line} strokeWidth="2" /></Svg>
            <div className="ml-[5px] h-[15px] w-[17px] bg-[#c9cec9]" />
            <Svg w={8} h={8} className="ml-auto"><path d="M2 0.5L6 4L2 7.5" {...line} strokeWidth="2" /></Svg>
          </div>
        </div>
      </div>
      <button type="button" className="mt-2 flex h-[22px] items-center justify-between rounded-lg bg-[#4b4d4d] px-[9px] text-[12px] font-bold text-[#b9bfc2]">
        HELP MODULE
        <span className="text-[#d5d5d5]"><DoubleUp /></span>
      </button>
    </aside>
  );
}

function App() {
  return (
    <div className="flex min-h-screen flex-col overflow-hidden bg-[#262827] font-['Noto_Sans','Segoe_UI',sans-serif] select-none">
      <TitleBar />
      <ControlBar />
      <main className="mt-1 mb-[5px] flex flex-1 gap-[7px] px-[3px]">
        <Inspector />
        <div className="flex min-w-0 flex-1 flex-col">
          <TrackView />
          <Console />
        </div>
        <MediaBrowser />
      </main>
    </div>
  );
}

export default App;
